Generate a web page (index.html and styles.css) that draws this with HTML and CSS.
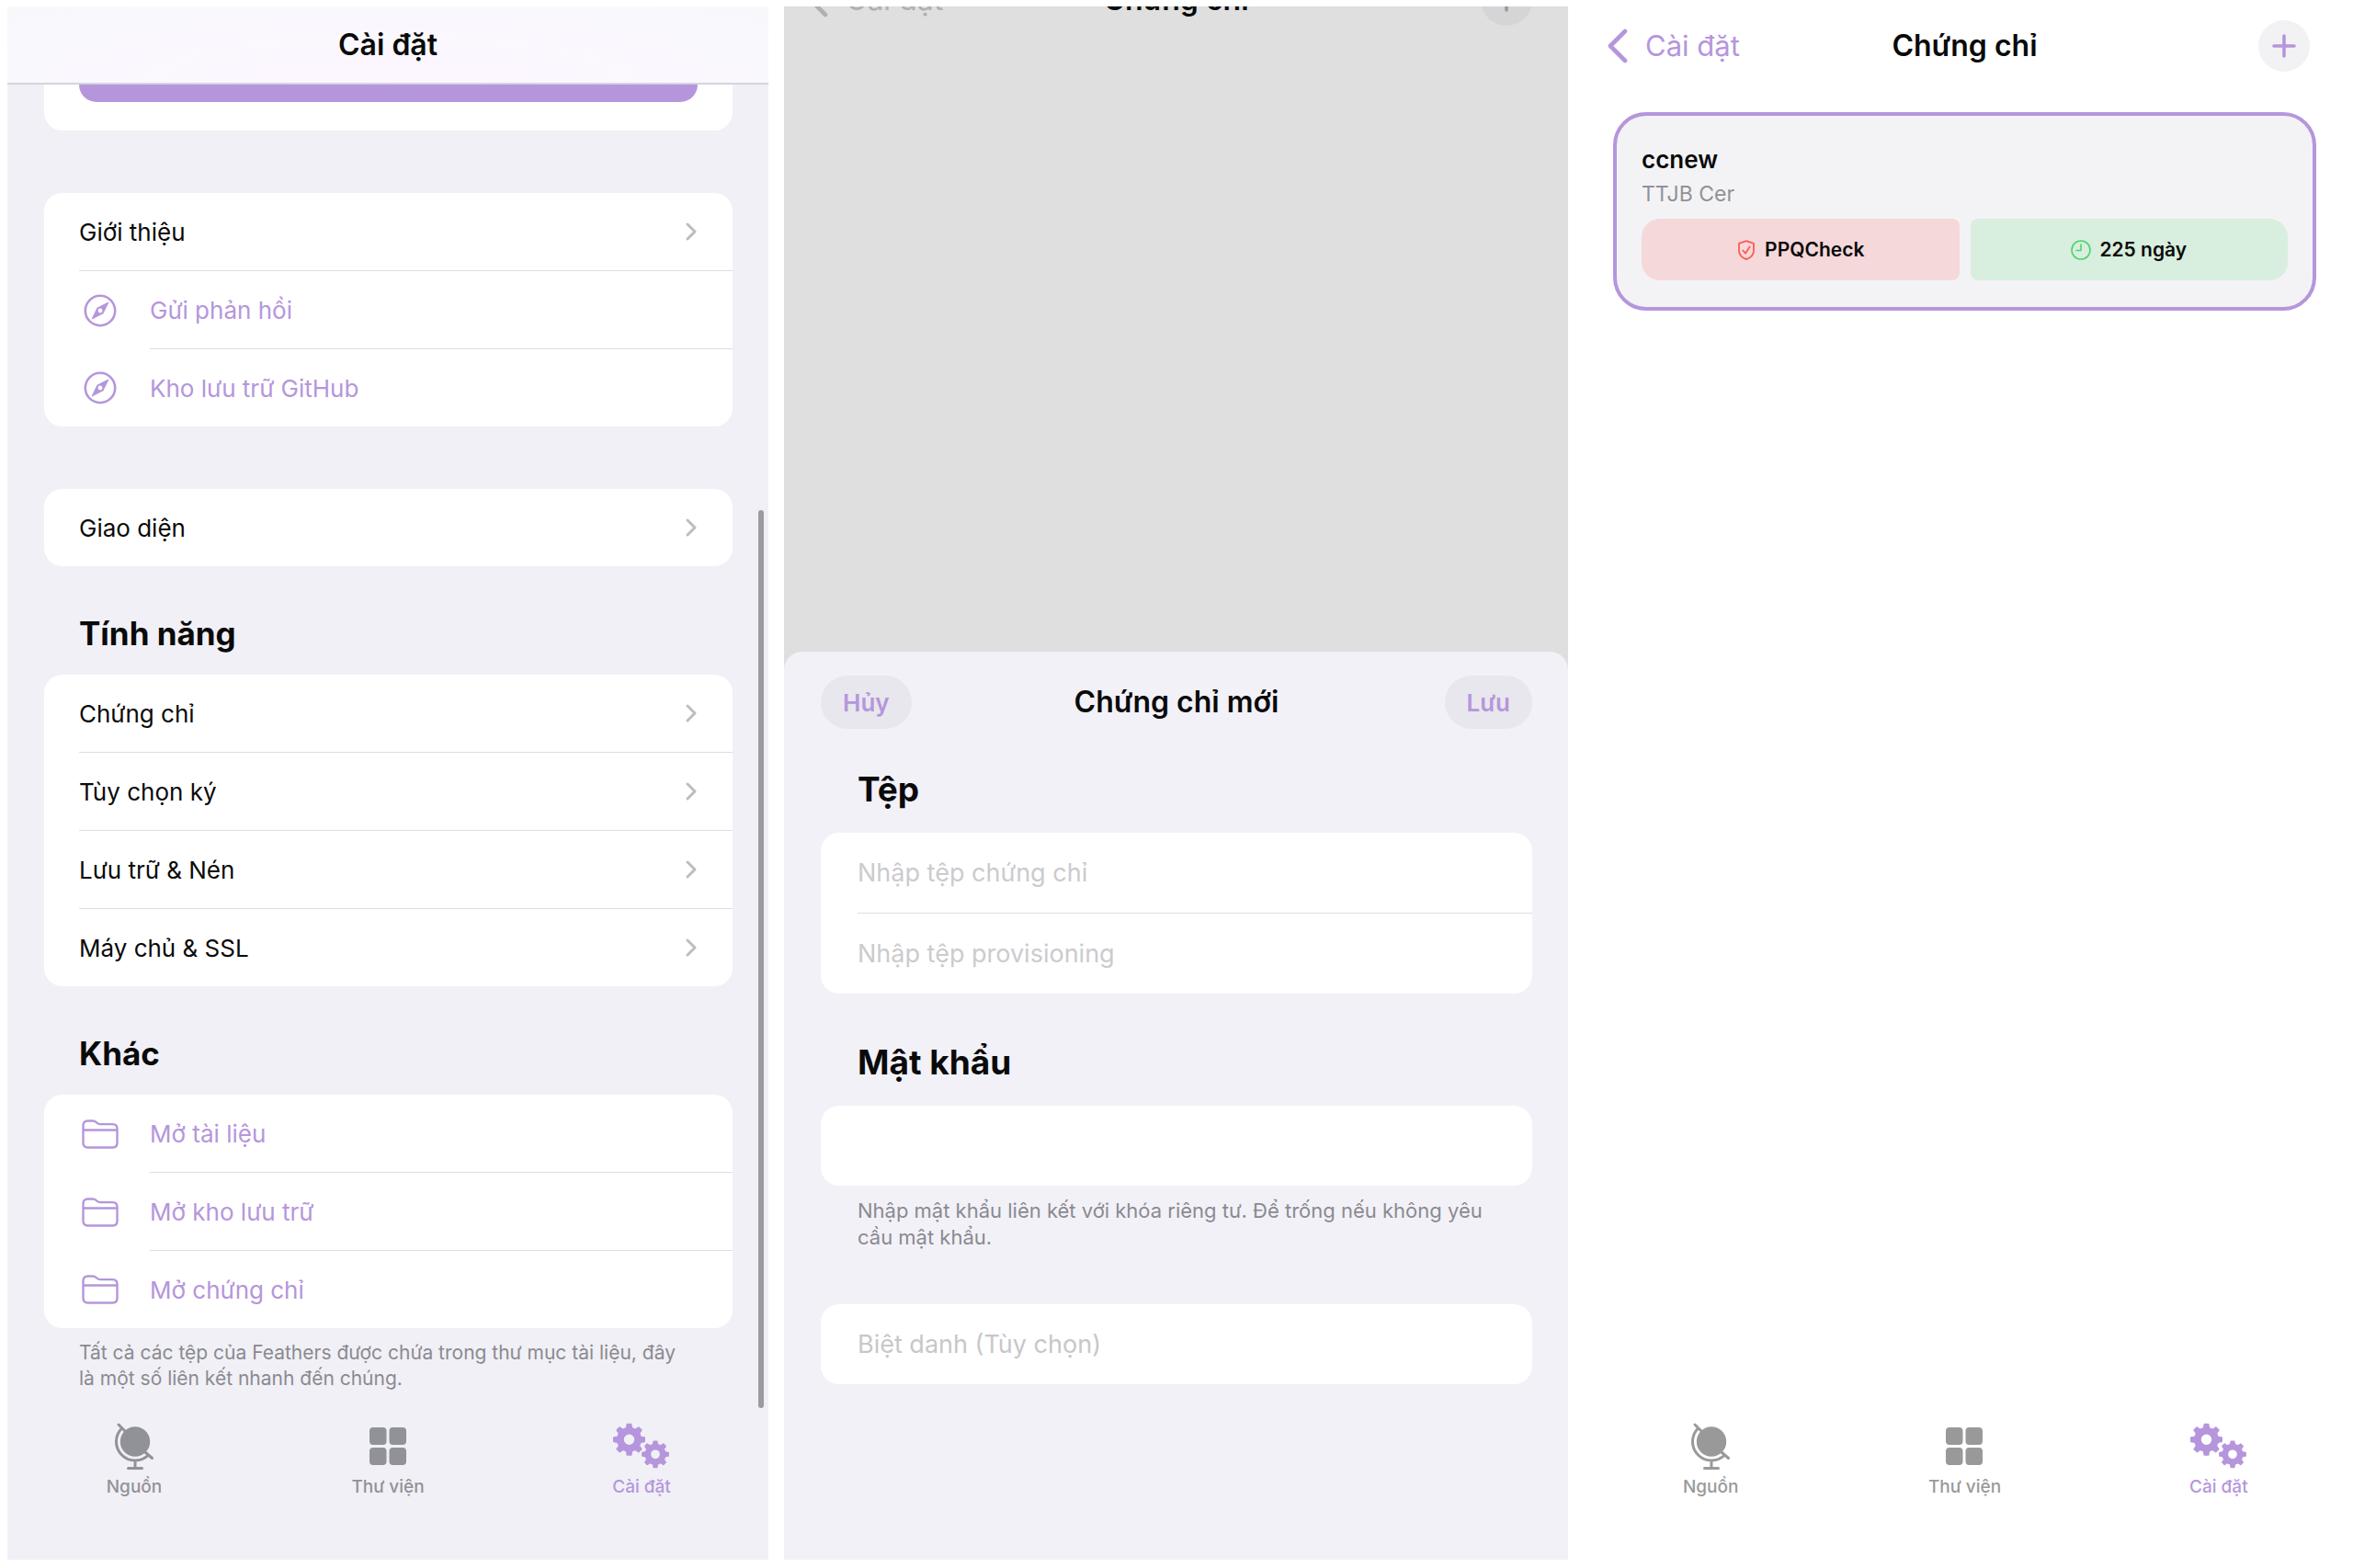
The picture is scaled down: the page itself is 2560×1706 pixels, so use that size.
FILE: index.html
```html
<!DOCTYPE html>
<html lang="vi">
<head>
<meta charset="UTF-8">
<meta name="viewport" content="width=device-width, initial-scale=1.0">
<title>Feather - Chứng chỉ</title>

<link rel="stylesheet" href="styles.css">
</head>

<body>

<!-- shared icons -->
<svg class="sprite" aria-hidden="true">
<symbol id="i-chevron" viewBox="0 0 14 22"><path d="M3 3l8 8-8 8" fill="none" stroke="currentColor" stroke-width="3" stroke-linecap="round" stroke-linejoin="round"/></symbol>
<symbol id="i-back" viewBox="0 0 24 38"><path d="M20 3L4 19l16 16" fill="none" stroke="currentColor" stroke-width="4.600" stroke-linecap="round" stroke-linejoin="round"/></symbol>
<symbol id="i-plus" viewBox="0 0 26 26"><path d="M13 2v22M2 13h22" fill="none" stroke="currentColor" stroke-width="3.600" stroke-linecap="round"/></symbol>
<symbol id="i-compass" viewBox="0 0 40 40">
<circle cx="20" cy="20" r="16.2" fill="none" stroke="currentColor" stroke-width="2.6"/>
<path fill="currentColor" fill-rule="evenodd" d="M29.2 11.6L23.4 23.2L11.6 29.2Q10.4 29.6 10.8 28.4L16.6 16.8L28.4 10.8Q29.6 10.4 29.2 11.6ZM20 17.6a2.4 2.4 0 1 0 0 4.800a2.4 2.4 0 1 0 0-4.800Z"/>
</symbol>
<symbol id="i-folder" viewBox="0 0 40 34">
<path d="M1.5 7.5q0-5 5-5h5.4q2 0 3.6 1.4l1.2 1q1.4 1.2 3.2 1.2h13.6q5 0 5 5v15.400q0 5-5 5h-27q-5 0-5-5zM1.500 12.500h37" fill="none" stroke="currentColor" stroke-width="2.400"/>
</symbol>
<symbol id="i-globe" viewBox="0 0 64 56">
<circle cx="33" cy="22.500" r="16.200" fill="currentColor"/>
<path d="M18.500 8A20.500 20.500 0 0 0 18.500 37A20.500 20.500 0 0 0 47.500 37M15 4l7 7M44 34l7.500 6.500M33 43v8M25.500 51.500h15" fill="none" stroke="currentColor" stroke-width="3" stroke-linecap="round"/>
</symbol>
<symbol id="i-grid" viewBox="0 0 64 56">
<g fill="currentColor"><rect x="12" y="7" width="18.500" height="19" rx="4"/><rect x="33.500" y="7" width="18.500" height="19" rx="4"/><rect x="12" y="29" width="18.500" height="19" rx="4"/><rect x="33.500" y="29" width="18.500" height="19" rx="4"/></g>
</symbol>
<symbol id="i-gears" viewBox="0 0 64 56">
<defs>
<path id="tooth" d="M-2.900 -11L-2 -16.500H2L2.900 -11Z" fill="currentColor" stroke="currentColor" stroke-width="2" stroke-linejoin="round"/>
<g id="gear">
<circle r="9.600" fill="none" stroke="currentColor" stroke-width="7.800"/>
<use href="#tooth"/><use href="#tooth" transform="rotate(45)"/><use href="#tooth" transform="rotate(90)"/><use href="#tooth" transform="rotate(135)"/>
<use href="#tooth" transform="rotate(180)"/><use href="#tooth" transform="rotate(225)"/><use href="#tooth" transform="rotate(270)"/><use href="#tooth" transform="rotate(315)"/>
</g>
</defs>
<use href="#gear" transform="translate(18.500 20.300)"/>
<use href="#gear" transform="translate(47 36.300) scale(.85)"/>
</symbol>
</svg>

<div class="screens">

<section class="screen settings">
<header class="nav nav-blur"><h1>Cài đặt</h1></header>

<div class="list">
<div class="card card-cut"><div class="cut-button"></div></div>

<div class="card">
<a class="row" href="#"><span class="row-body">Giới thiệu<svg class="chevron"><use href="#i-chevron"/></svg></span></a>
<a class="row link" href="#"><svg class="row-icon"><use href="#i-compass"/></svg><span class="row-body">Gửi phản hồi</span></a>
<a class="row link" href="#"><svg class="row-icon"><use href="#i-compass"/></svg><span class="row-body">Kho lưu trữ GitHub</span></a>
</div>

<div class="card">
<a class="row" href="#"><span class="row-body">Giao diện<svg class="chevron"><use href="#i-chevron"/></svg></span></a>
</div>

<h2>Tính năng</h2>
<div class="card">
<a class="row" href="#"><span class="row-body">Chứng chỉ<svg class="chevron"><use href="#i-chevron"/></svg></span></a>
<a class="row" href="#"><span class="row-body">Tùy chọn ký<svg class="chevron"><use href="#i-chevron"/></svg></span></a>
<a class="row" href="#"><span class="row-body">Lưu trữ &amp; Nén<svg class="chevron"><use href="#i-chevron"/></svg></span></a>
<a class="row" href="#"><span class="row-body">Máy chủ &amp; SSL<svg class="chevron"><use href="#i-chevron"/></svg></span></a>
</div>

<h2>Khác</h2>
<div class="card">
<a class="row link" href="#"><svg class="row-icon"><use href="#i-folder"/></svg><span class="row-body">Mở tài liệu</span></a>
<a class="row link" href="#"><svg class="row-icon"><use href="#i-folder"/></svg><span class="row-body">Mở kho lưu trữ</span></a>
<a class="row link" href="#"><svg class="row-icon"><use href="#i-folder"/></svg><span class="row-body">Mở chứng chỉ</span></a>
</div>
<p class="note">Tất cả các tệp của Feathers được chứa trong thư mục tài liệu, đây là một số liên kết nhanh đến chúng.</p>
</div>

<nav class="tabs">
<a href="#"><svg><use href="#i-globe"/></svg>Nguồn</a>
<a href="#"><svg><use href="#i-grid"/></svg>Thư viện</a>
<a href="#" class="active"><svg><use href="#i-gears"/></svg>Cài đặt</a>
</nav>
<div class="scrollbar"></div>
</section>

<section class="screen add">
<div class="dimmed">
<header class="nav">
<a class="back" href="#"><svg><use href="#i-back"/></svg>Cài đặt</a>
<h1>Chứng chỉ</h1>
<button class="plus" aria-label="Thêm"><svg><use href="#i-plus"/></svg></button>
</header>
</div>

<form class="sheet">
<header class="sheet-nav">
<button type="button" class="pill">Hủy</button>
<h1>Chứng chỉ mới</h1>
<button type="button" class="pill">Lưu</button>
</header>

<h2>Tệp</h2>
<div class="card">
<button type="button" class="field">Nhập tệp chứng chỉ</button>
<button type="button" class="field">Nhập tệp provisioning</button>
</div>

<h2><label for="password">Mật khẩu</label></h2>
<div class="card"><input class="field" type="password" id="password"></div>
<p class="note">Nhập mật khẩu liên kết với khóa riêng tư. Để trống nếu không yêu cầu mật khẩu.</p>

<div class="card"><input class="field" type="text" aria-label="Biệt danh" placeholder="Biệt danh (Tùy chọn)"></div>
</form>
</section>

<section class="screen certs">
<header class="nav">
<a class="back" href="#"><svg><use href="#i-back"/></svg>Cài đặt</a>
<h1>Chứng chỉ</h1>
<button class="plus" aria-label="Thêm"><svg><use href="#i-plus"/></svg></button>
</header>

<article class="cert">
<h3>ccnew</h3>
<p>TTJB Cer</p>
<div class="badges">
<span class="badge red"><svg viewBox="0 0 22 22"><path d="M11 1.200l8 2.600v8.200q0 5.800-8 9.200q-8-3.400-8-9.200V3.800zM7.300 11.500l2.700 3.200 4.600-7.200" fill="none" stroke="currentColor" stroke-width="1.800" stroke-linecap="round" stroke-linejoin="round"/></svg>PPQCheck</span>
<span class="badge green"><svg viewBox="0 0 22 22"><path d="M11 5v6.500H6" fill="none" stroke="currentColor" stroke-width="1.600" stroke-linecap="round" stroke-linejoin="round"/><circle cx="11" cy="11" r="10" fill="none" stroke="currentColor" stroke-width="1.600"/></svg>225 ngày</span>
</div>
</article>

<nav class="tabs">
<a href="#"><svg><use href="#i-globe"/></svg>Nguồn</a>
<a href="#"><svg><use href="#i-grid"/></svg>Thư viện</a>
<a href="#" class="active"><svg><use href="#i-gears"/></svg>Cài đặt</a>
</nav>
</section>

</div>

</body>
</html>
```
FILE: styles.css
```css
*{
    box-sizing:border-box;
}

body{
    margin:0;
    font-family:Inter, "Noto Sans", sans-serif;
    font-size:26px;
    color:#0a0a0a;
    background:white;
}

h1, h2, h3, p{
    margin:0;
}

a{
    color:inherit;
    text-decoration:none;
}

button, input{
    font:inherit;
    border:none;
    background:none;
}

.sprite{
    position:absolute;
    width:0;
    height:0;
}

.screens{
    display:grid;
    grid-template-columns:828fr 853fr 829fr;
    gap:17px;
    min-height:100vh;
    padding:7px 8px 9px;
}

.screen{
    position:relative;
    display:flex;
    flex-direction:column;
    overflow:hidden;
}

.settings{
    background:#f1f0f6;
}

/* top bar */
.nav{
    display:grid;
    grid-template-columns:1fr auto 1fr;
    align-items:center;
    height:85px;
    padding:0 25px;
}

.nav h1, .sheet-nav h1{
    grid-column:2;
    font-size:32px;
    font-weight:600;
    line-height:40px;
}

.nav-blur{
    background:radial-gradient(ellipse at 50% 100%, #fdf6fe, #faf8fe 55%, #f8f8fb);
    border-bottom:2px solid #d6d4dc;
}

.back{
    display:flex;
    align-items:center;
    gap:18px;
    font-size:31px;
    color:#b596dc;
}

.back svg{
    width:24px;
    height:38px;
}

.plus{
    grid-column:3;
    justify-self:end;
    display:flex;
    align-items:center;
    justify-content:center;
    width:56px;
    height:56px;
    margin-right:14px;
    padding:0;
    border-radius:50%;
    background:#f2f2f5;
    color:#b596dc;
}

.plus svg{
    width:26px;
    height:26px;
}

/* grouped lists */
.list{
    padding:0 39px 0 40px;
}

.card{
    display:flex;
    flex-direction:column;
    background:white;
    border-radius:20px;
    overflow:hidden;
}

.card + .card{
    margin-top:68px;
}

.card-cut{
    height:50px;
    padding:0 38px;
    border-radius:0 0 20px 20px;
}

.cut-button{
    height:19px;
    background:#b596dc;
    border-radius:0 0 20px 20px;
}

h2{
    padding:53px 38px 25px;
    font-size:35px;
    font-weight:700;
    line-height:40px;
}

.row{
    display:flex;
    align-items:center;
    padding-left:38px;
}

.row-body{
    flex:1;
    display:flex;
    align-items:center;
    justify-content:space-between;
    height:85px;
    padding-right:38px;
    border-bottom:1px solid #dedee2;
}

.row:last-child .row-body{
    height:84px;
    border-bottom:none;
}

.row-icon{
    width:40px;
    height:40px;
    margin:0 34px 0 3px;
}

.link{
    color:#b596dc;
}

.chevron{
    width:14px;
    height:22px;
    color:#bdbdc1;
}

.note{
    padding:13px 48px 0 38px;
    font-size:21px;
    line-height:28px;
    color:#8a8a90;
}

.tabs{
    display:grid;
    grid-template-columns:repeat(3, 1fr);
    margin-top:auto;
    padding-bottom:67px;
    font-size:19px;
    font-weight:500;
    line-height:24px;
    color:#919198;
}

.tabs a{
    display:flex;
    flex-direction:column;
    align-items:center;
    gap:4px;
}

.tabs svg{
    width:64px;
    height:56px;
}

.tabs .active{
    color:#b596dc;
}

.scrollbar{
    position:absolute;
    top:548px;
    right:5px;
    bottom:165px;
    width:6px;
    border-radius:3px;
    background:#9b9ba0;
}

/* new certificate sheet */
.add{
    background:#dfdfdf;
}

.dimmed{
    flex:702;
    overflow:hidden;
}

.dimmed .nav{
    margin-top:-50px;
}

.dimmed .back{
    font-size:32px;
    color:#b0b0b0;
}

.dimmed .plus{
    background:#d5d5d8;
    color:#9a9a9a;
}

.sheet{
    flex:962;
    padding:26px 39px 0 40px;
    background:#f2f1f8;
    border-radius:20px 20px 0 0;
}

.sheet-nav{
    display:grid;
    grid-template-columns:1fr auto 1fr;
    align-items:center;
}

.pill{
    justify-self:start;
    height:58px;
    padding:0 24px;
    border-radius:29px;
    background:#e8e7ed;
    color:#b596dc;
    font-weight:600;
}

.pill:last-child{
    justify-self:end;
}

.sheet h2{
    padding:55px 40px 27px;
    font-size:37px;
}

.sheet .sheet-nav + h2{
    padding-top:46px;
}

.sheet .note{
    padding:13px 40px 0;
    font-size:22px;
    line-height:29px;
}

.field{
    height:88px;
    padding:0 40px;
    font-size:27px;
    text-align:left;
    color:#cbcbce;
    border-bottom:1px solid #dedee2;
}

.field + .field, input.field{
    height:87px;
    border-bottom:none;
}

button.field:first-child{
    margin-left:40px;
    padding-left:0;
}

.field::placeholder{
    color:#c7c7ca;
}

.note + .card{
    margin-top:58px;
}

/* certificates */
.certs{
    background:white;
}

.cert{
    margin:30px 32px 0;
    padding:28px 27px 29px;
    background:#f3f3f6;
    border:4px solid #b596dc;
    border-radius:36px;
}

.cert h3{
    font-size:26px;
    font-weight:600;
    line-height:40px;
}

.cert p{
    font-size:23px;
    line-height:34px;
    color:#919196;
}

.badges{
    display:grid;
    grid-template-columns:1fr 1fr;
    gap:12px;
    margin-top:10px;
}

.badge{
    display:flex;
    align-items:center;
    justify-content:center;
    gap:9px;
    height:67px;
    border-radius:20px 8px 8px 20px;
    background:#f5d8da;
    color:#0a0a0a;
    font-size:21px;
    font-weight:600;
}

.badge svg{
    width:22px;
    height:22px;
    color:#ff5a50;
}

.badge.green{
    border-radius:8px 20px 20px 8px;
    background:#d8eede;
}

.badge.green svg{
    color:#4cd471;
}

.certs .tabs{
    color:#999999;
}

.certs .tabs .active{
    color:#b596dc;
}
```
